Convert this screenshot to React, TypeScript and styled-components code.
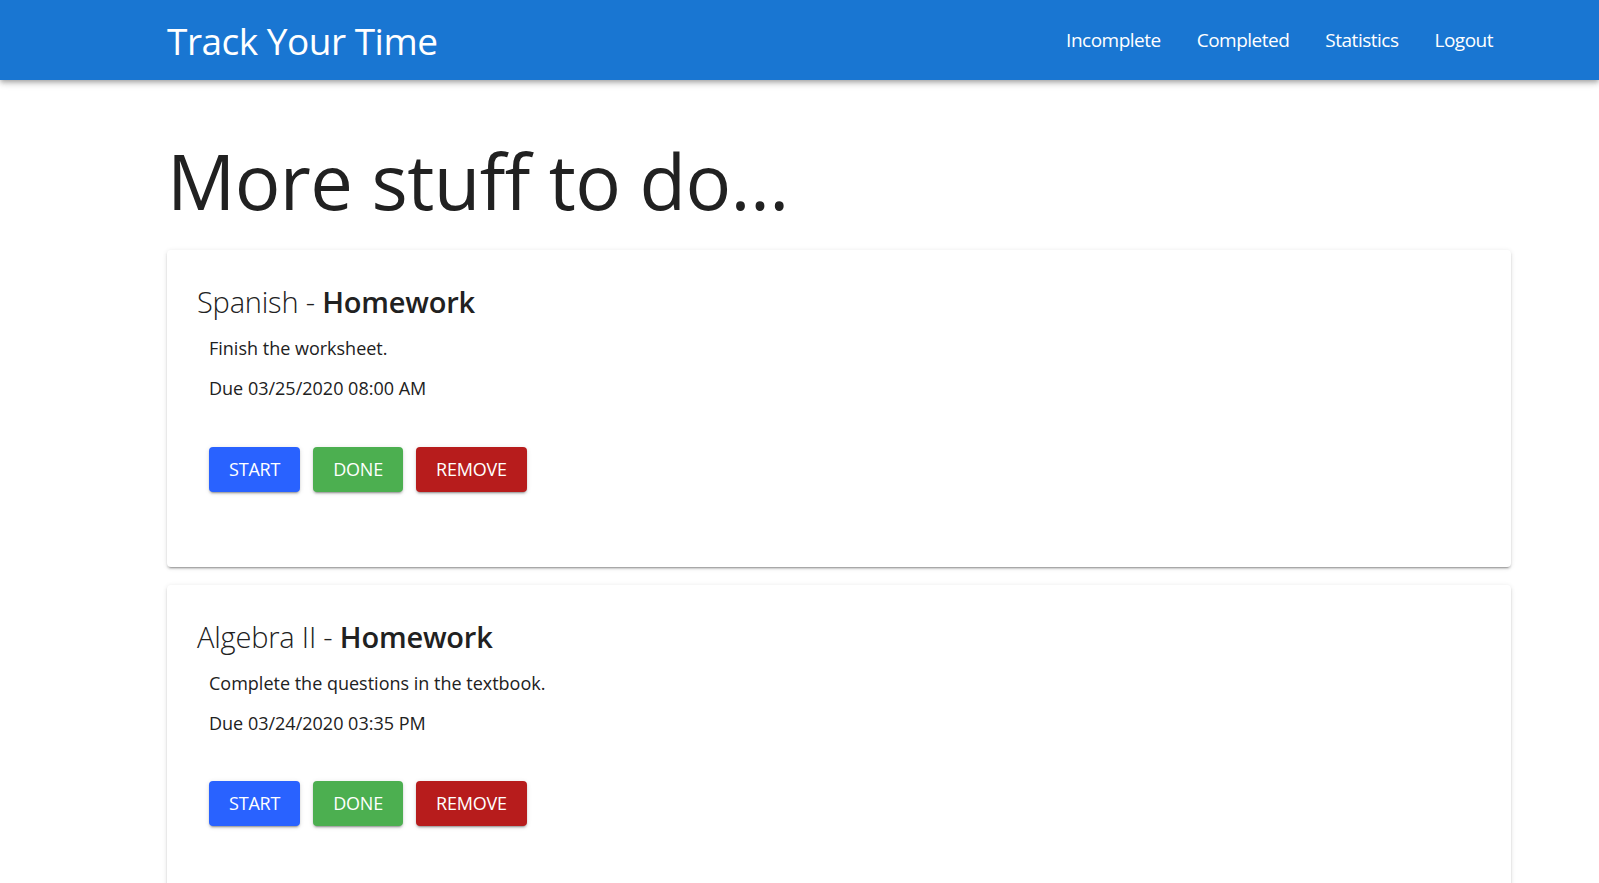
import React from "react";
import styled, { createGlobalStyle } from "styled-components";

const GlobalStyle = createGlobalStyle`
    html, body {
        margin: 0;
        padding: 0;
        background: #ffffff;
        font-family: "Open Sans", "Noto Sans", sans-serif;
        color: rgba(0, 0, 0, 0.87);
    }
`;

const AppBar = styled.header`
    height: 80px;
    background: #1976d2;
    box-shadow: 0 2px 4px -1px rgba(0, 0, 0, 0.2), 0 4px 5px 0 rgba(0, 0, 0, 0.14), 0 1px 10px 0 rgba(0, 0, 0, 0.12);
    display: flex;
    align-items: center;
    padding: 0 88px 0 167px;
`;

const Brand = styled.h1`
    margin: 0;
    flex: 1;
    font-size: 37px;
    font-weight: 400;
    color: #ffffff;
    letter-spacing: -0.5px;
`;

const NavLink = styled.a`
    padding: 6px 18px;
    font-size: 19px;
    color: #ffffff;
    text-decoration: none;
    cursor: pointer;
    letter-spacing: -0.5px;
`;

const Main = styled.main`
    padding: 55px 88px 0 167px;
    display: flex;
    flex-direction: column;
    gap: 18px;
`;

const PageTitle = styled.h2`
    margin: 0 0 6px;
    font-size: 76px;
    font-weight: 400;
    line-height: 1.2;
    color: #212121;
    letter-spacing: -0.6px;
`;

const Card = styled.section`
    background: #ffffff;
    border-radius: 4px;
    box-shadow: 0 3px 1px -2px rgba(0, 0, 0, 0.2), 0 2px 2px 0 rgba(0, 0, 0, 0.14), 0 1px 5px 0 rgba(0, 0, 0, 0.12);
    padding: 32px 30px 75px;
`;

const CardTitle = styled.h3`
    margin: 0 0 15px;
    font-size: 29px;
    font-weight: 300;
    color: #212121;
    letter-spacing: -0.2px;
`;

const Subject = styled.span`
    font-weight: 300;
`;

const Kind = styled.strong`
    font-weight: 600;
`;

const Detail = styled.p`
    margin: 0 0 15px 12px;
    font-size: 18px;
    line-height: 1.4;
    color: #212121;
`;

const Actions = styled.div`
    display: flex;
    gap: 13px;
    margin: 45px 0 0 12px;
`;

const ActionButton = styled.button<{ tone: string }>`
    height: 45px;
    padding: 0 20px;
    border: none;
    border-radius: 4px;
    background: ${({ tone }) => tone};
    color: #ffffff;
    font-family: inherit;
    font-size: 18px;
    text-transform: uppercase;
    letter-spacing: -0.2px;
    cursor: pointer;
    box-shadow: 0 3px 1px -2px rgba(0, 0, 0, 0.2), 0 2px 2px 0 rgba(0, 0, 0, 0.14), 0 1px 5px 0 rgba(0, 0, 0, 0.12);
`;

type Task = {
    subject: string;
    kind: string;
    description: string;
    due: string;
};

const tasks: Task[] = [
    {
        subject: "Spanish",
        kind: "Homework",
        description: "Finish the worksheet.",
        due: "03/25/2020 08:00 AM",
    },
    {
        subject: "Algebra II",
        kind: "Homework",
        description: "Complete the questions in the textbook.",
        due: "03/24/2020 03:35 PM",
    },
];

const TaskCard = ({ task }: { task: Task }) => (
    <Card>
        <CardTitle>
            <Subject>{task.subject} - </Subject>
            <Kind>{task.kind}</Kind>
        </CardTitle>
        <Detail>{task.description}</Detail>
        <Detail>Due {task.due}</Detail>
        <Actions>
            <ActionButton tone="#2962ff">Start</ActionButton>
            <ActionButton tone="#4caf50">Done</ActionButton>
            <ActionButton tone="#b71c1c">Remove</ActionButton>
        </Actions>
    </Card>
);

const App = () => (
    <>
        <GlobalStyle />
        <AppBar>
            <Brand>Track Your Time</Brand>
            <nav>
                <NavLink>Incomplete</NavLink>
                <NavLink>Completed</NavLink>
                <NavLink>Statistics</NavLink>
                <NavLink>Logout</NavLink>
            </nav>
        </AppBar>
        <Main>
            <PageTitle>More stuff to do...</PageTitle>
            {tasks.map(task => (
                <TaskCard key={task.subject} task={task} />
            ))}
        </Main>
    </>
);

export default App;
